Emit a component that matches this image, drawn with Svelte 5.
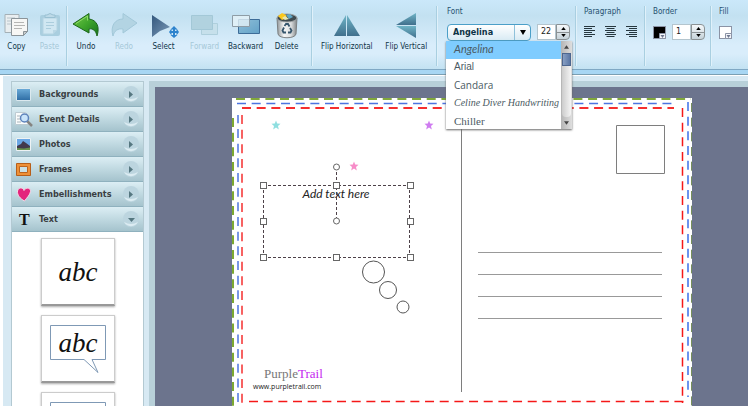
<script>
    const fonts = [
        {name: 'Angelina', css: 'angelina'},
        {name: 'Arial', css: 'arial'},
        {name: 'Candara', css: 'candara'},
        {name: 'Celine Diver Handwriting', css: 'celine'},
        {name: 'Chiller', css: 'chiller'}
    ]

    const sections = ['Backgrounds', 'Event Details', 'Photos', 'Frames', 'Embellishments', 'Text']
    const handles = [[31, 87], [104, 87], [178, 87], [31, 123], [178, 123], [31, 159], [104, 159], [178, 159]]
    const stars = [
        {x: 44, y: 27, color: '#8fdfe0'},
        {x: 197, y: 27, color: '#cf7cf0'},
        {x: 122, y: 68, color: '#f78cc8'}
    ]

    let font = $state('Angelina')
    let listOpen = $state(true)
    let fontSize = $state('22')
    let borderSize = $state('1')
    let openSection = $state('Text')

    function pickFont(name) {
        font = name
        listOpen = false
    }

    function step(value, by) {
        return String(Math.max(0, Number(value) + by))
    }
</script>

{#snippet tool(name, label, disabled = false)}
    <button type="button" class="tool" {disabled}>
        <svg class="tool-icon" viewBox="0 0 30 28" aria-hidden="true">
            {#if name === 'copy'}
                <path d="M3 2.500h14v18H3z" fill="#e9eef0" stroke="#a4b0b6"/>
                <path d="M5 6h8M5 9h5M5 12h5" stroke="#b8c4ca"/>
                <path d="M9.500 6.500h16v13l-4 4h-12z" fill="#f7f7f5" stroke="#8b9499"/>
                <path d="M12 10.500h10M12 13.500h11M12 16.500h8" stroke="#b5b5b3"/>
                <path d="M25.500 19.500h-4v4z" fill="#c9cccc" stroke="#8b9499"/>
            {:else if name === 'paste'}
                <rect x="5" y="3" width="20" height="21" rx="2" fill="#a9cedf"/>
                <path d="M8 6h14v12l-4 4H8z" fill="#d0e7f2" stroke="#b3d3e2"/>
                <path d="M10 5.500V3h2q3-3 6 0h2v2.500z" fill="#bddae8" stroke="#99c0d2"/>
                <path d="M11 10.500h8M11 13.500h8M11 16.500h5" stroke="#abcddd"/>
                <path d="M22 18h-4v4z" fill="#b9d7e5"/>
            {:else if name === 'undo'}
                <path d="M2 12 18 1.500v5.500c8 1 11 8 8 17-1-5-4-8-8-7v4z" fill="url(#green)" stroke="#1c671b" stroke-linejoin="round"/>
                <path d="M5 11.500 16.500 4v4.500" fill="none" stroke="#8edb66"/>
            {:else if name === 'redo'}
                <path d="M28 11 14 1.500V7C6 7 1 14 4 24c1-5 5-8 10-7v4z" fill="#b3d4e3" stroke="#a2c8d9" stroke-linejoin="round"/>
            {:else if name === 'select'}
                <path d="M3 3v22l8-6 10-4z" fill="url(#steel)"/>
                <path d="m25 14 3.500 3.500H26V19h1.500v-2.500L30 20l-2.500 3.500V21H26v2h2.500L25 26l-3.500-3H24v-2h-1.500v2.500L20 20l2.500-3.500V19H24v-1.500h-2.500z" fill="#2d83cd"/>
            {:else if name === 'forward'}
                <path d="M11.500 11.500h16v11h-16z" fill="#c6e0eb" stroke="#aecfdc"/>
                <path d="M1.500 3.500h21v14h-21z" fill="#b1d2df" stroke="#a3c8d7"/>
            {:else if name === 'backward'}
                <path d="M7.500 7.500h21v14h-21z" fill="url(#aqua)" stroke="#3d6c98"/>
                <path d="M1.500 3.500h17v11h-17z" fill="#e5f2f8" fill-opacity=".8" stroke="#8e9da6"/>
            {:else if name === 'delete'}
                <path d="m5 6 1 16c1 5 17 5 18 0l1-16z" fill="url(#metal)" stroke="#7c8082"/>
                <ellipse cx="15" cy="6" rx="10" ry="4" fill="#3f4b50" stroke="#9da2a4"/>
                <path d="m6 4 4-3 4 2 1 3-5 2z" fill="#fbc81c"/>
                <path d="m14 3 4-1 3 3-4 2z" fill="#60a6c6"/>
                <path d="m10 6 3-2 4 3-4 1z" fill="#e7e6b2"/>
                <path d="m12.500 14 1.500-2h2l1.500 2.500M18 16l1.500 2.500-1 2H16M14 20.500h-2.500l-1-2 1.500-3" fill="none" stroke="#36566d" stroke-width="1.800"/>
            {:else if name === 'flip-h'}
                <path d="M14 3v21H2z" fill="url(#teal)"/>
                <path d="M15 3v21h13z" fill="url(#teal)"/>
            {:else if name === 'flip-v'}
                <path d="M25 1v12H5z" fill="url(#teal)"/>
                <path d="M25 14v12L5 14z" fill="url(#teal)"/>
            {/if}
        </svg>
        <span>{label}</span>
    </button>
{/snippet}

{#snippet spinner(label, up, down)}
    <span class="spinner">
        <button type="button" aria-label="Increase {label}" onclick={up}>
            <svg viewBox="0 0 6 4"><path d="M0 4 3 0l3 4z"/></svg>
        </button>
        <button type="button" aria-label="Decrease {label}" onclick={down}>
            <svg viewBox="0 0 6 4"><path d="m0 0 3 4 3-4z"/></svg>
        </button>
    </span>
{/snippet}

{#snippet align(label, offset)}
    <button type="button" class="plain" aria-label={label}>
        <svg width="11" height="12" viewBox="0 0 11 12">
            {#each [11, 8, 11, 8, 11, 8] as w, i}
                <rect x={(11 - w) * offset} y={i * 2} width={w} height="1" fill="#26373f"/>
            {/each}
        </svg>
    </button>
{/snippet}

{#snippet swatch(label, color)}
    <button type="button" class="plain" aria-label={label}>
        <svg width="13" height="13" viewBox="0 0 13 13">
            <rect x=".5" y=".5" width="12" height="12" fill={color} stroke="#8b93a5"/>
            <path d="M6.500 7.500h6v5h-6z" fill="#f4f6fa" stroke="#8b93a5"/>
            <path d="M7.500 9h4l-2 3z" fill="#6f7890"/>
        </svg>
    </button>
{/snippet}

<svg class="defs" aria-hidden="true">
    <defs>
        <linearGradient id="green" x2="1" y2="1">
            <stop stop-color="#75c94a"/>
            <stop offset=".5" stop-color="#3fa62c"/>
            <stop offset="1" stop-color="#15721a"/>
        </linearGradient>
        <linearGradient id="steel" x2="1" y2="1">
            <stop stop-color="#34587d"/>
            <stop offset="1" stop-color="#7b9ab8"/>
        </linearGradient>
        <linearGradient id="aqua" x2="1" y2="1">
            <stop stop-color="#8ebfd8"/>
            <stop offset="1" stop-color="#63a2c8"/>
        </linearGradient>
        <linearGradient id="metal">
            <stop stop-color="#8f9496"/>
            <stop offset=".35" stop-color="#f5f6f6"/>
            <stop offset=".7" stop-color="#dcdfe0"/>
            <stop offset="1" stop-color="#7f8486"/>
        </linearGradient>
        <linearGradient id="teal" x2="0" y2="1">
            <stop stop-color="#6fb4c6"/>
            <stop offset="1" stop-color="#41708d"/>
        </linearGradient>
        <linearGradient id="blue" x2="0" y2="1">
            <stop stop-color="#6cacd9"/>
            <stop offset="1" stop-color="#2d6ca4"/>
        </linearGradient>
    </defs>
</svg>

<div class="app">
    <header class="toolbar">
        <div class="group clipboard">
            {@render tool('copy', 'Copy')}
            {@render tool('paste', 'Paste', true)}
        </div>
        <div class="group history">
            {@render tool('undo', 'Undo')}
            {@render tool('redo', 'Redo', true)}
            {@render tool('select', 'Select')}
            {@render tool('forward', 'Forward', true)}
            {@render tool('backward', 'Backward')}
            {@render tool('delete', 'Delete')}
        </div>
        <div class="group flip">
            {@render tool('flip-h', 'Flip Horizontal')}
            {@render tool('flip-v', 'Flip Vertical')}
        </div>
        <div class="group panel font-panel">
            <label for="font">Font</label>
            <div class="controls">
                <div class="font-box">
                    <select id="font" bind:value={font}>
                        {#each fonts as item}
                            <option>{item.name}</option>
                        {/each}
                    </select>
                    <button type="button" class="font-arrow" aria-label="Show fonts" onclick={() => listOpen = !listOpen}>
                        <svg width="6" height="5" viewBox="0 0 6 5"><path d="M0 0h6L3 5z"/></svg>
                    </button>
                    {#if listOpen}
                        <div class="font-list">
                            <ul role="listbox" aria-label="Fonts">
                                {#each fonts as item}
                                    <li role="option" aria-selected={font === item.name} class:active={font === item.name}>
                                        <button type="button" class={item.css} onclick={() => pickFont(item.name)}>{item.name}</button>
                                    </li>
                                {/each}
                            </ul>
                            <div class="scrollbar">
                                <svg viewBox="0 0 6 4"><path d="M0 4 3 0l3 4z"/></svg>
                                <span class="track"><span class="thumb"></span></span>
                                <svg viewBox="0 0 6 4"><path d="m0 0 3 4 3-4z"/></svg>
                            </div>
                        </div>
                    {/if}
                </div>
                <div class="number">
                    <input type="text" aria-label="Font size" bind:value={fontSize}>
                    {@render spinner('font size', () => fontSize = step(fontSize, 1), () => fontSize = step(fontSize, -1))}
                </div>
            </div>
        </div>
        <div class="group panel paragraph-panel">
            <span>Paragraph</span>
            <div class="controls">
                {@render align('Align left', 0)}
                {@render align('Align center', 0.5)}
                {@render align('Align right', 1)}
            </div>
        </div>
        <div class="group panel border-panel">
            <label for="border">Border</label>
            <div class="controls">
                {@render swatch('Border color', '#000')}
                <div class="number">
                    <input id="border" type="text" bind:value={borderSize}>
                    {@render spinner('border', () => borderSize = step(borderSize, 1), () => borderSize = step(borderSize, -1))}
                </div>
            </div>
        </div>
        <div class="group panel fill-panel">
            <span>Fill</span>
            <div class="controls">
                {@render swatch('Fill color', '#fff')}
            </div>
        </div>
    </header>

    <div class="work">
        <aside class="sidebar">
            {#each sections as name}
                <button type="button" class="section" aria-expanded={openSection === name}
                        onclick={() => openSection = name}>
                    <svg class="section-icon" viewBox="0 0 18 16" aria-hidden="true">
                        {#if name === 'Backgrounds'}
                            <path d="M1.500 2.500h14v12h-14z" fill="url(#blue)" stroke="#dbe9ef"/>
                        {:else if name === 'Event Details'}
                            <path d="M.5 1.500h10l3 3v9H.5z" fill="#fafcfc" stroke="#bdcbd2"/>
                            <path d="M2 5h3M2 8h3M2 11h4" stroke="#a9b4ba"/>
                            <path d="m12 10 5 5" stroke="#858481" stroke-width="2.500"/>
                            <circle cx="9.500" cy="7" r="4" fill="#c9e4fa" stroke="#5d83bb" stroke-width="1.500"/>
                        {:else if name === 'Photos'}
                            <path d="M1.500 2.500h14v12h-14z" fill="#6ba7e4" stroke="#edf2f4"/>
                            <path d="M2 11h13v3H2z" fill="#66914c"/>
                            <path d="m2 10 4-2 2-3 3 2 4 3v1.500l-6 1-7-.5z" fill="#42394c"/>
                        {:else if name === 'Frames'}
                            <path d="M1.500 2.500h14v12h-14z" fill="#ee9037" stroke="#b75e19"/>
                            <path d="M4.500 5.500h8v6h-8z" fill="#cae0e5" stroke="#bd641e"/>
                        {:else if name === 'Embellishments'}
                            <path d="M9.500 15C5 12.500 2 9 2.500 5 3.500 1 8 1 9 4.500c2-4 7-2.500 6.500 1-.5 3.500-3.500 6-6 9.500z" fill="#e3257c" stroke="#f3dce8"/>
                        {:else}
                            <text x="4" y="14">T</text>
                        {/if}
                    </svg>
                    <span class="section-name">{name}</span>
                    <svg class="knob" viewBox="0 0 16 16" aria-hidden="true">
                        <circle cx="8" cy="8" r="8" fill="#bcd5df"/>
                        <path d="M1 11a8 8 0 0 0 14 0q-7 4-14 0z" fill="#dcecf2"/>
                        {#if openSection === name}
                            <path d="M5 7h7l-3.500 4z" fill="#557780"/>
                        {:else}
                            <path d="M6 5v7l4-3.500z" fill="#557780"/>
                        {/if}
                    </svg>
                </button>
            {/each}
            {#if openSection === 'Text'}
                <div class="thumbs">
                    <button type="button" class="thumb-card"><span class="abc">abc</span></button>
                    <button type="button" class="thumb-card">
                        <svg class="bubble" viewBox="0 0 56 48" aria-hidden="true">
                            <path d="M.5.500h55v34H42l6 13-14-13H.500z" fill="none" stroke="#7f99b5"/>
                        </svg>
                        <span class="abc small">abc</span>
                    </button>
                    <button type="button" class="thumb-card" aria-label="Text box">
                        <svg class="bubble" viewBox="0 0 56 48" aria-hidden="true">
                            <path d="M.5.500h55v34H.500z" fill="none" stroke="#7f99b5"/>
                        </svg>
                    </button>
                </div>
            {/if}
        </aside>

        <main class="stage">
            <svg class="card" width="460" height="316" viewBox="0 0 460 316">
                <rect width="460" height="316" fill="#fff"/>
                <g fill="none" stroke-dasharray="9 5.670">
                    <path d="M1 1h458" stroke="#82a93c" stroke-width="2" stroke-dashoffset="-3"/>
                    <path d="M1 20v296" stroke="#7ca832" stroke-width="2"/>
                    <path d="M459.500 5v311" stroke="#78905c"/>
                    <path d="M5 5.500h440" stroke="#4c74e0" stroke-width="1.500"/>
                    <path d="M6 17v290" stroke="#4c74e0" stroke-width="1.500" stroke-dashoffset="-14"/>
                    <path d="M456 4v295" stroke="#6c92ee" stroke-width="2"/>
                    <path d="M10 10h432" stroke="#f52f2f" stroke-width="2"/>
                    <path d="M10 17v290" stroke="#f52f2f" stroke-width="1.500"/>
                    <path d="M450.500 10v295" stroke="#f51818" stroke-width="1.500"/>
                    <path d="M17 303.500h437" stroke="#f51818" stroke-width="1.500"/>
                </g>
                {#each stars as star}
                    <path transform="translate({star.x} {star.y})" fill={star.color}
                          d="m0-4.500 1.200 3.100 3.300.2L2 1l.8 3.400L0 2.600l-2.800 1.800L-2 1l-2.500-2.200 3.300-.2z"/>
                {/each}
                <path d="M229.500 27v267M384.500 27.500h48v48h-48z" fill="none" stroke="#7e7e7e"/>
                {#each [154, 176, 198, 220] as y}
                    <path d="M246 {y}.500h184" stroke="#999"/>
                {/each}
                <g fill="#fff" stroke="#555">
                    <circle cx="141.500" cy="174" r="11"/>
                    <circle cx="156" cy="192" r="8.500"/>
                    <circle cx="171" cy="209" r="6"/>
                </g>
                <text class="card-text" x="104" y="100" text-anchor="middle">Add text here</text>
                <path d="M31 87.500h147M31 159.500h147M31.500 87v72M177.500 87v72M104.500 69v54" fill="none" stroke="#4d4148" stroke-dasharray="3 2"/>
                <g fill="#fff" stroke="#666">
                    {#each handles as [x, y]}
                        <rect x={x - 2.5} y={y - 2.5} width="6" height="6"/>
                    {/each}
                    <circle cx="104.500" cy="69" r="3"/>
                    <circle cx="104.500" cy="123" r="3"/>
                </g>
                <text class="brand" x="32" y="280">Purple<tspan>Trail</tspan></text>
                <text class="site" x="21" y="291">www.purpletrail.com</text>
            </svg>
        </main>
    </div>
</div>

<style>
    :global(body) {
        margin: 0;
        background: #fff;
    }

    .defs {
        position: absolute;
        width: 0;
        height: 0;
    }

    .app {
        display: flex;
        flex-direction: column;
        height: 100vh;
        overflow: hidden;
        font-family: "DejaVu Sans Condensed", "DejaVu Sans", sans-serif;
        font-size: 8px;
        line-height: 12px;
        color: #0d3346;
    }

    button, input, select {
        font: inherit;
        color: inherit;
        box-sizing: border-box;
        margin: 0;
        padding: 0;
        border: 0;
        background: none;
        border-radius: 0;
    }

    ul {
        list-style: none;
        margin: 0;
        padding: 0;
    }

    svg {
        display: block;
        flex: none;
    }

    .toolbar {
        display: flex;
        flex: none;
        box-sizing: border-box;
        height: 75px;
        padding: 6px 0 9px;
        background: linear-gradient(#cbe8fa 0, #c3e1f1 16px, #d9edfb 45px, #d9edfb 54px, #c3e2f2 69px, #7fa8c4 69px, #7fa8c4 70px, #a7d6f3 70px, #a7d6f3 74px, #7b9fb2 74px);
    }

    .group {
        display: flex;
        flex: none;
        box-sizing: border-box;
    }

    .group + .group {
        border-left: 1px solid #a9cfe1;
        box-shadow: inset 1px 0 #e0f1fa;
    }

    .history {
        width: 245px;
    }

    .flip {
        width: 125px;
        padding-left: 5px;
    }

    .tool {
        display: flex;
        flex-direction: column;
        align-items: center;
        gap: 1px;
        width: 41px;
        padding-top: 6px;
        white-space: nowrap;
    }

    .tool:disabled {
        color: #a5c8d8;
    }

    .clipboard .tool {
        width: 33px;
    }

    .history .tool:nth-child(-n+2) {
        width: 38px;
    }

    .flip .tool {
        width: 60px;
    }

    .tool-icon {
        width: 30px;
        height: 28px;
    }

    .panel {
        flex-direction: column;
        gap: 6px;
        padding-left: 8px;
        color: #24506e;
    }

    .font-panel {
        width: 139px;
        padding-left: 10px;
    }

    .paragraph-panel {
        width: 69px;
    }

    .border-panel {
        width: 66px;
    }

    .fill-panel {
        flex: 1;
    }

    .controls {
        display: flex;
        align-items: center;
        gap: 6px;
        height: 16px;
    }

    .paragraph-panel .controls {
        gap: 10px;
    }

    .font-box {
        position: relative;
        display: flex;
        box-sizing: border-box;
        width: 84px;
        height: 17px;
        border: 1px solid #4b9fc8;
        border-radius: 4px;
        background: linear-gradient(#fff, #d9ebf4);
    }

    .font-box select {
        flex: 1;
        min-width: 0;
        padding-left: 5px;
        appearance: none;
        font-size: 9px;
        font-weight: bold;
        color: #0d3346;
    }

    .font-arrow {
        display: flex;
        align-items: center;
        justify-content: center;
        width: 16px;
        border-left: 1px solid #8fc1da;
    }

    .font-list {
        position: absolute;
        z-index: 2;
        top: 16px;
        left: -2px;
        display: flex;
        width: 126px;
        height: 88px;
        background: #fff;
        box-shadow: 0 1px 2px #666;
    }

    .font-list ul {
        flex: 1;
        min-width: 0;
        overflow: hidden;
    }

    .font-list li {
        height: 18px;
    }

    .font-list li.active {
        background: #7fccff;
    }

    .font-list li button {
        width: 100%;
        height: 16px;
        padding-left: 8px;
        overflow: hidden;
        text-align: left;
        white-space: nowrap;
        font-size: 10px;
        color: #4b5a63;
    }

    .font-list .angelina {
        font-family: Lato, sans-serif;
        font-style: italic;
        font-size: 11px;
    }

    .font-list .arial {
        font-family: "Liberation Sans", sans-serif;
    }

    .font-list .candara {
        font-family: "Open Sans", sans-serif;
    }

    .font-list .celine {
        font-family: "Liberation Serif", serif;
        font-style: italic;
    }

    .font-list .chiller {
        font-family: "Liberation Serif", serif;
        font-size: 11px;
    }

    .scrollbar {
        display: flex;
        flex-direction: column;
        align-items: center;
        gap: 4px;
        width: 11px;
        padding: 4px 0;
        box-sizing: border-box;
        background: linear-gradient(90deg, #b5b5b5, #dedede);
    }

    .scrollbar svg {
        width: 5px;
        height: 4px;
        fill: #444;
    }

    .track {
        flex: 1;
        width: 9px;
        border-radius: 0 0 4px 4px;
        background: linear-gradient(90deg, #ccc, #f4f4f4);
    }

    .thumb {
        display: block;
        box-sizing: border-box;
        height: 13px;
        border: 1px solid #4d668f;
        background: linear-gradient(90deg, #889fc3, #5b77a5);
    }

    .number {
        display: flex;
        height: 16px;
    }

    .number input {
        width: 19px;
        padding-left: 3px;
        border: 1px solid #b4c5ce;
        background: #fff;
        font-family: "DejaVu Sans", sans-serif;
        font-size: 8px;
        color: #222;
    }

    .spinner {
        display: flex;
        flex-direction: column;
        box-sizing: border-box;
        width: 14px;
        border: 1px solid #8b9295;
        border-radius: 0 4px 4px 0;
        background: linear-gradient(#f5f8fa, #c5d2d9);
    }

    .spinner button {
        display: flex;
        flex: 1;
        align-items: center;
        justify-content: center;
    }

    .spinner button + button {
        border-top: 1px solid #8b9295;
    }

    .spinner svg {
        width: 5px;
        height: 3px;
    }

    .work {
        display: flex;
        flex: 1;
        min-height: 0;
        margin-left: 3px;
        padding-top: 5px;
        border-top: 1px solid #fff;
        background: #d7e9f3;
    }

    .sidebar {
        flex: none;
        box-sizing: border-box;
        width: 133px;
        margin: 0 5px 0 8px;
        overflow: hidden;
        border: 1px solid #b3c9d2;
        border-bottom: 0;
        background: #fff;
    }

    .section {
        display: flex;
        align-items: center;
        gap: 6px;
        width: 100%;
        height: 25px;
        padding: 0 4px 0 3px;
        border-bottom: 1px solid #8fb1be;
        background: linear-gradient(#dceef4, #c0d9e1 50%, #a5c3cd);
        font-size: 9px;
        font-weight: bold;
        color: #3a3f42;
    }

    .section-icon {
        width: 18px;
        height: 16px;
        overflow: visible;
    }

    .section-icon text {
        font: bold 16px "Liberation Serif", serif;
        fill: #111;
    }

    .section-name {
        flex: 1;
        text-align: left;
    }

    .knob {
        width: 16px;
        height: 16px;
    }

    .thumbs {
        display: flex;
        flex-direction: column;
        align-items: center;
        gap: 9px;
        padding: 6px 0 0 1px;
    }

    .thumb-card {
        display: grid;
        place-items: center;
        width: 74px;
        height: 68px;
        border: 1px solid #ccc;
        border-bottom: 2px solid #999;
        background: #fff;
        box-shadow: 0 1px 2px #aaa;
    }

    .thumb-card > * {
        grid-area: 1 / 1;
    }

    .bubble {
        width: 56px;
        height: 48px;
    }

    .abc {
        font: italic 27px/30px "Liberation Serif", serif;
        color: #111;
    }

    .abc.small {
        padding-bottom: 12px;
    }

    .stage {
        flex: 1;
        min-width: 0;
        padding: 11px 0 0 77px;
        overflow: hidden;
        border: solid #b8d0d9;
        border-width: 6px 0 0 6px;
        background: #6c748d;
    }

    .card-text {
        font: italic 12px Lato, sans-serif;
        fill: #222;
    }

    .brand {
        font: 13px "Liberation Serif", serif;
        fill: #777;
    }

    .brand tspan {
        fill: #c41ff0;
    }

    .site {
        font: 7px "Open Sans", sans-serif;
        fill: #222;
    }
</style>
